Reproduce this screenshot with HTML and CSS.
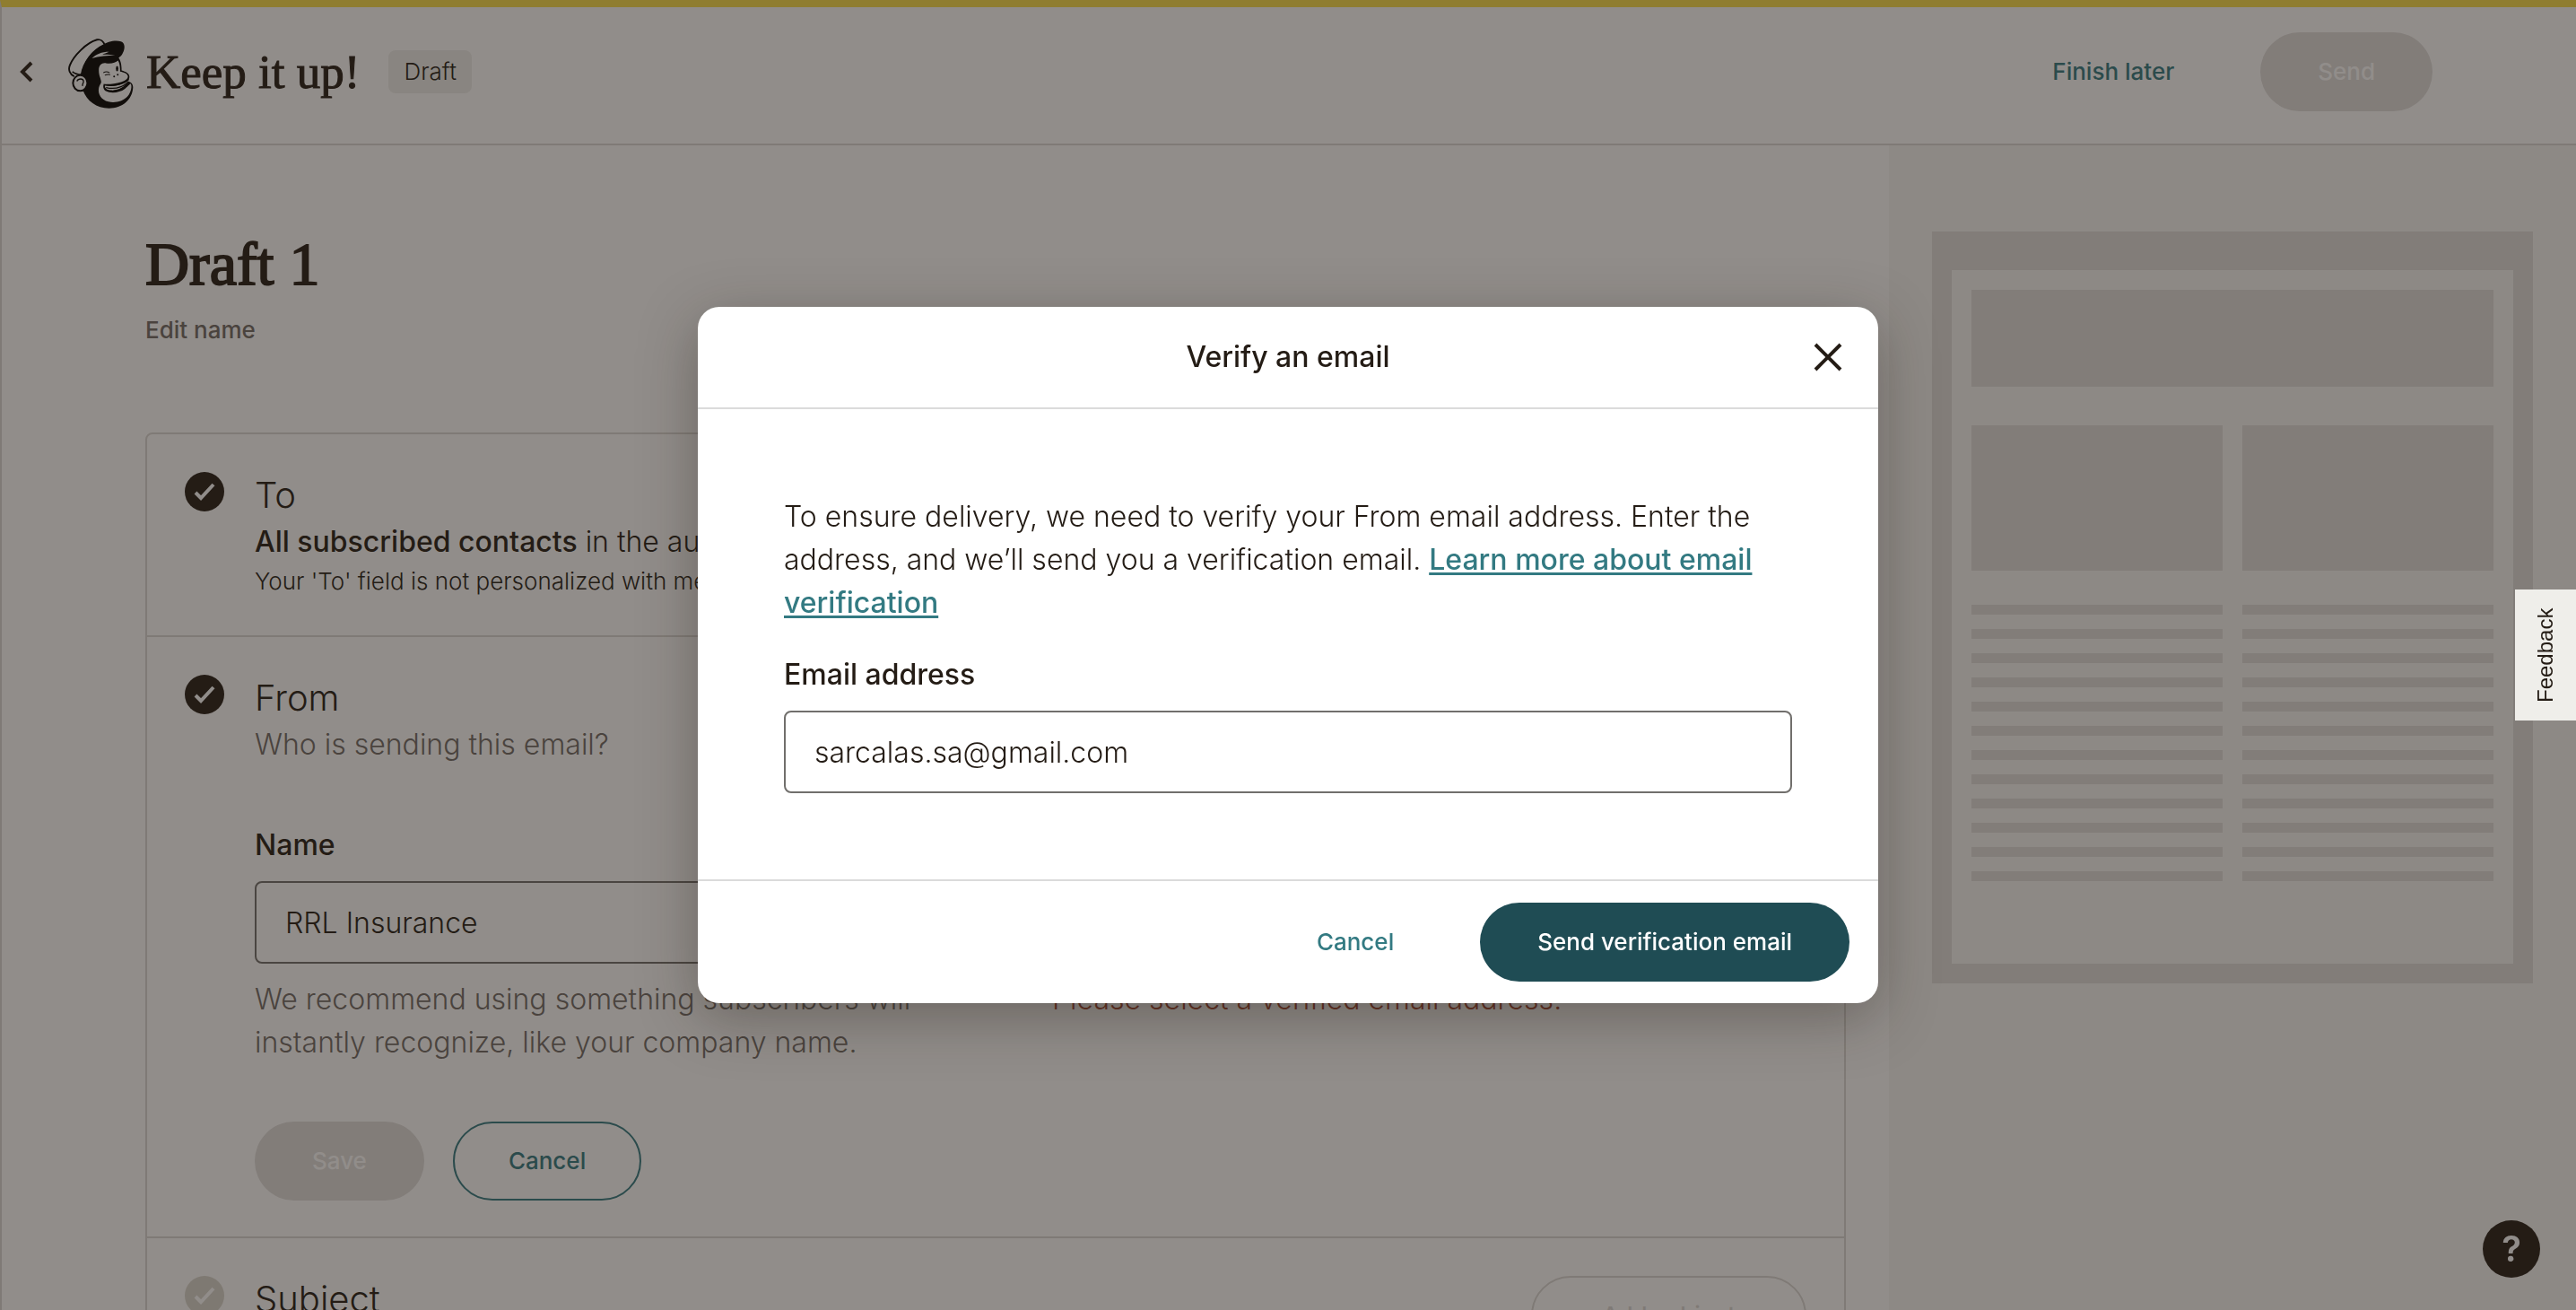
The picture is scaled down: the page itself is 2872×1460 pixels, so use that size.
FILE: index.html
```html
<!DOCTYPE html>
<html lang="en">
<head>
<meta charset="utf-8">
<meta name="viewport" content="width=device-width, initial-scale=1">
<title>Draft 1</title>
<link rel="stylesheet" href="styles.css">
</head>
<body>
<div class="app">
  <header class="topbar">
    <a class="back" href="#" aria-label="Back">
      <svg width="16" height="24" viewBox="0 0 16 24" fill="none" stroke="currentColor" stroke-width="4"><path d="M13 2 3 12l10 10"/></svg>
    </a>
    <svg class="logo" viewBox="48 40 218 233" role="img" aria-label="Mailchimp">
      <!-- hat crown -->
      <path d="M68 166C54 158 47 144 54 128C66 98 108 54 144 44C156 41 166 50 170 62" class="line" stroke-width="6"/>
      <!-- head and brim -->
      <path d="M163 62C178 50 206 44 224 50C238 55 238 74 230 88C227 96 222 100 216 104C222 112 226 124 226 146C240 150 252 156 252 167C252 174 248 179 244 182C258 184 264 192 264 202C262 244 228 272 184 272C142 272 110 248 97 212C84 186 88 152 106 118C120 92 140 74 163 62Z"/>
      <path d="M60 148C55 142 58 132 62 124C78 94 112 58 143 49C153 48 160 54 163 61C128 74 98 112 90 158C78 158 68 156 60 148Z" class="paper"/>
      <path d="M62 150C72 158 82 160 92 160C98 120 128 80 166 62" class="line" stroke-width="5"/>
      <!-- face -->
      <path d="M150 146C150 128 160 120 174 122C192 125 206 120 214 113C220 122 221 136 221 150C232 152 247 157 247 167C246 178 228 184 212 188C196 192 180 192 168 192C164 196 164 208 172 214C190 224 220 220 236 208C244 202 252 192 256 190C262 198 257 220 246 232C232 248 204 256 182 250C158 244 146 224 150 204C152 194 158 190 158 184C158 176 150 164 150 146Z" class="paper"/>
      <!-- brim highlight -->
      <path d="M127 106C140 92 160 84 184 84C174 88 168 90 162 93C176 92 192 94 204 95C180 98 150 97 127 106Z" class="paper"/>
      <!-- mouth -->
      <path d="M170 196C196 202 224 196 246 183C236 202 214 214 190 212C176 211 170 206 170 196Z" class="paper"/>
      <path d="M166 193C194 200 228 194 250 176M168 194C166 210 180 216 198 215C222 214 242 202 250 186M174 203C200 209 226 203 244 188" class="line" stroke-width="4"/>
      <!-- eyes and nose -->
      <path d="M165 154C172 149 180 150 186 154M170 162C176 159 182 159 188 160" class="line" stroke-width="3"/>
      <ellipse cx="211" cy="140" rx="4" ry="9"/>
      <circle cx="201" cy="166" r="3"/>
      <circle cx="213" cy="160" r="3"/>
      <!-- ear -->
      <ellipse cx="88" cy="188" rx="24" ry="26" class="paper line-edge" stroke-width="6"/>
      <path d="M77 182C82 172 98 172 99 182C100 188 94 190 96 198" class="line" stroke-width="4"/>
    </svg>
    <h1 class="campaign">Keep it up!</h1>
    <span class="badge">Draft</span>
    <div class="topbar-actions">
      <a class="text-link" href="#">Finish later</a>
      <button class="btn btn-muted" type="button" disabled>Send</button>
    </div>
  </header>

  <div class="workspace">
    <main class="editor">
      <h2 class="draft-title">Draft 1</h2>
      <a class="edit-name" href="#">Edit name</a>

      <div class="card">
        <section class="step">
          <svg class="tick" viewBox="0 0 44 44"><circle cx="22" cy="22" r="22"/><path d="M12 23l6 6 14-15"/></svg>
          <div class="step-body">
            <h3>To</h3>
            <p><strong>All subscribed contacts</strong> in the audience</p>
            <p class="small">Your 'To' field is not personalized with merge tags.</p>
          </div>
        </section>

        <section class="step">
          <svg class="tick" viewBox="0 0 44 44"><circle cx="22" cy="22" r="22"/><path d="M12 23l6 6 14-15"/></svg>
          <div class="step-body">
            <h3>From</h3>
            <p class="muted">Who is sending this email?</p>
            <div class="fields">
              <div class="field">
                <label for="from-name">Name</label>
                <input id="from-name" type="text" value="RRL Insurance">
                <p class="muted">We recommend using something subscribers will instantly recognize, like your company name.</p>
              </div>
              <div class="field">
                <label for="from-email">Email address</label>
                <select id="from-email"><option></option></select>
                <p class="error">Please select a verified email address.</p>
              </div>
            </div>
            <div class="actions">
              <button class="btn btn-muted" type="button" disabled>Save</button>
              <button class="btn btn-outline" type="button">Cancel</button>
            </div>
          </div>
        </section>

        <section class="step">
          <svg class="tick pending" viewBox="0 0 44 44"><circle cx="22" cy="22" r="22"/><path d="M12 23l6 6 14-15"/></svg>
          <div class="step-body">
            <h3>Subject</h3>
          </div>
          <button class="btn btn-ghost" type="button" disabled>Add subject</button>
        </section>
      </div>
    </main>

    <aside class="preview">
      <div class="mock">
        <div class="mock-page">
          <div class="mock-hero"></div>
          <div class="mock-columns">
            <div class="mock-column"><div class="mock-image"></div><div class="mock-lines"></div></div>
            <div class="mock-column"><div class="mock-image"></div><div class="mock-lines"></div></div>
          </div>
        </div>
      </div>
    </aside>
  </div>
  <button class="help" type="button" aria-label="Help">?</button>
</div>

<div class="overlay">
  <div class="modal" role="dialog" aria-modal="true" aria-labelledby="modal-title">
    <div class="modal-head">
      <h2 id="modal-title">Verify an email</h2>
      <button class="close" type="button" aria-label="Close">
        <svg width="32" height="32" viewBox="0 0 32 32" fill="none" stroke="currentColor" stroke-width="4"><path d="M2 2l28 28M30 2 2 30"/></svg>
      </button>
    </div>
    <div class="modal-body">
      <p>To ensure delivery, we need to verify your From email address. Enter the address, and we’ll send you a verification email. <a href="#">Learn more about email verification</a></p>
      <div class="field">
        <label for="verify-email">Email address</label>
        <input id="verify-email" type="email" value="sarcalas.sa@gmail.com">
      </div>
    </div>
    <div class="modal-foot">
      <button class="text-link" type="button">Cancel</button>
      <button class="btn btn-primary" type="button">Send verification email</button>
    </div>
  </div>
</div>
<button class="feedback" type="button">Feedback</button>
</body>
</html>
```
FILE: styles.css
```css
* { box-sizing: border-box; }

:root {
  --ink: #241c15;
  --muted: #716b67;
  --teal: #337a82;
  --fill: #e0dedd;
  --line: #dbd9d6;
}

body {
  margin: 0;
  color: var(--ink);
  font: 300 32px/48px Inter, "Liberation Sans", sans-serif;
}

h1, h2, h3, p { margin: 0; font-weight: 300; }
strong { font-weight: 500; }
button, input, select { font: inherit; color: inherit; }
button { border: 0; background: none; padding: 0; }

.app {
  height: 100vh;
  overflow: hidden;
  display: flex;
  flex-direction: column;
  border-top: 8px solid #fade4b;
  border-left: 2px solid var(--line);
}

/* Top bar */
.topbar {
  flex: none;
  display: flex;
  align-items: center;
  height: 154px;
  padding: 0 160px 8px 20px;
  border-bottom: 2px solid var(--line);
}
.back { display: flex; margin-right: 38px; color: var(--ink); }
.logo { width: 73px; height: 78px; margin-top: 4px; fill: #000; }
.logo .paper { fill: #fff; }
.logo .line { fill: none; stroke: #000; }
.logo .line-edge { stroke: #000; }
.campaign {
  margin-left: 14px;
  font: 400 53px/68px "Liberation Serif", serif;
  -webkit-text-stroke: 1px var(--ink);
}
.badge {
  margin-left: 32px;
  padding: 4px 17px;
  border-radius: 8px;
  background: #efefec;
  font-size: 26px;
  line-height: 40px;
}
.topbar-actions { display: flex; align-items: center; gap: 96px; margin-left: auto; }
.text-link {
  color: var(--teal);
  font-size: 26px;
  line-height: 40px;
  font-weight: 500;
  text-decoration: none;
}

/* Buttons */
.btn {
  height: 88px;
  padding: 0 64px;
  border-radius: 44px;
  font-size: 26px;
  line-height: 40px;
  font-weight: 500;
  white-space: nowrap;
}
.btn-muted { background: var(--fill); color: #fff; }
.btn-outline { padding: 0 60px; border: 2px solid var(--teal); color: var(--teal); }
.btn-ghost { border: 2px solid var(--line); color: var(--line); padding: 0 77px; }
.btn-primary { background: #1f4c54; color: #fff; }

/* Workspace */
.workspace {
  flex: 1;
  min-height: 0;
  display: grid;
  grid-template-columns: minmax(0, 1fr) 766px;
}
.editor { padding: 94px 48px 0 160px; }
.draft-title {
  font: 400 68px/76px "Liberation Serif", serif;
  -webkit-text-stroke: 2px var(--ink);
}
.edit-name {
  display: block;
  margin-top: 16px;
  color: var(--muted);
  font-size: 26px;
  line-height: 40px;
  font-weight: 500;
  text-decoration: none;
}
.card { margin-top: 94px; border: 2px solid var(--line); border-radius: 8px; }
.step {
  display: flex;
  align-items: flex-start;
  gap: 34px;
  padding: 42px 42px 40px;
}
.step + .step { border-top: 2px solid var(--line); }
.step-body { flex: 1; }
.step h3 { margin-bottom: 2px; font-size: 40px; line-height: 52px; }
.tick { flex: none; width: 44px; height: 44px; fill: var(--ink); }
.tick path { fill: none; stroke: #fff; stroke-width: 4; }
.tick.pending { fill: #d9d7cf; }
.step .small { font-size: 26px; line-height: 40px; }
.muted { color: var(--muted); }
.error { color: #a04530; }
.fields { display: grid; grid-template-columns: 1fr 1fr; gap: 48px; margin-top: 64px; }
.field { display: flex; flex-direction: column; gap: 16px; }
.field label { font-weight: 500; }
.field input, .field select {
  width: 100%;
  height: 92px;
  padding: 0 32px;
  border: 2px solid #716f6c;
  border-radius: 8px;
  background: #fff;
}
.actions { display: flex; gap: 32px; margin-top: 64px; }

/* Email preview */
.preview { padding: 96px 48px; background: #f6f6f4; }
.mock { padding: 43px 22px 22px; background: var(--fill); }
.mock-page { padding: 22px 22px 92px; background: #f6f6f4; }
.mock-hero { height: 108px; background: var(--fill); }
.mock-columns { display: grid; grid-template-columns: 1fr 1fr; gap: 22px; margin-top: 43px; }
.mock-image { height: 162px; background: var(--fill); }
.mock-lines {
  height: 308px;
  margin-top: 38px;
  background: repeating-linear-gradient(var(--fill) 0 11px, transparent 11px 27px);
}

.help {
  position: fixed;
  right: 40px;
  bottom: 36px;
  width: 64px;
  height: 64px;
  border-radius: 50%;
  background: var(--ink);
  color: #fff;
  font-size: 40px;
  font-weight: 600;
}

/* Dialog */
.overlay {
  position: fixed;
  inset: 0;
  display: flex;
  align-items: center;
  justify-content: center;
  background: rgba(36, 28, 21, .5);
}
.modal {
  width: 1316px;
  max-width: 100%;
  border-radius: 24px;
  background: #fff;
  box-shadow: 0 16px 64px rgba(36, 28, 21, .35);
}
.modal-head {
  display: grid;
  grid-template-columns: 32px 1fr 32px;
  align-items: center;
  padding: 32px 40px;
  border-bottom: 2px solid #dbdbdb;
}
.modal-head h2 {
  grid-column: 2;
  text-align: center;
  font-size: 32px;
  line-height: 48px;
  font-weight: 500;
}
.close { display: flex; }
.modal-body { display: flex; flex-direction: column; gap: 32px; padding: 96px; }
.modal-body a {
  color: var(--teal);
  font-weight: 500;
  text-decoration-thickness: 3px;
  text-underline-offset: 3px;
}
.modal-foot {
  display: flex;
  align-items: center;
  justify-content: flex-end;
  gap: 96px;
  padding: 24px 32px;
  border-top: 2px solid #dbdbdb;
}

.feedback {
  position: fixed;
  top: 50%;
  right: 0;
  transform: translateY(-50%) rotate(180deg);
  width: 68px;
  height: 146px;
  background: #efeeea;
  font: 400 24px/32px "Liberation Sans", sans-serif;
  writing-mode: vertical-rl;
}
```
